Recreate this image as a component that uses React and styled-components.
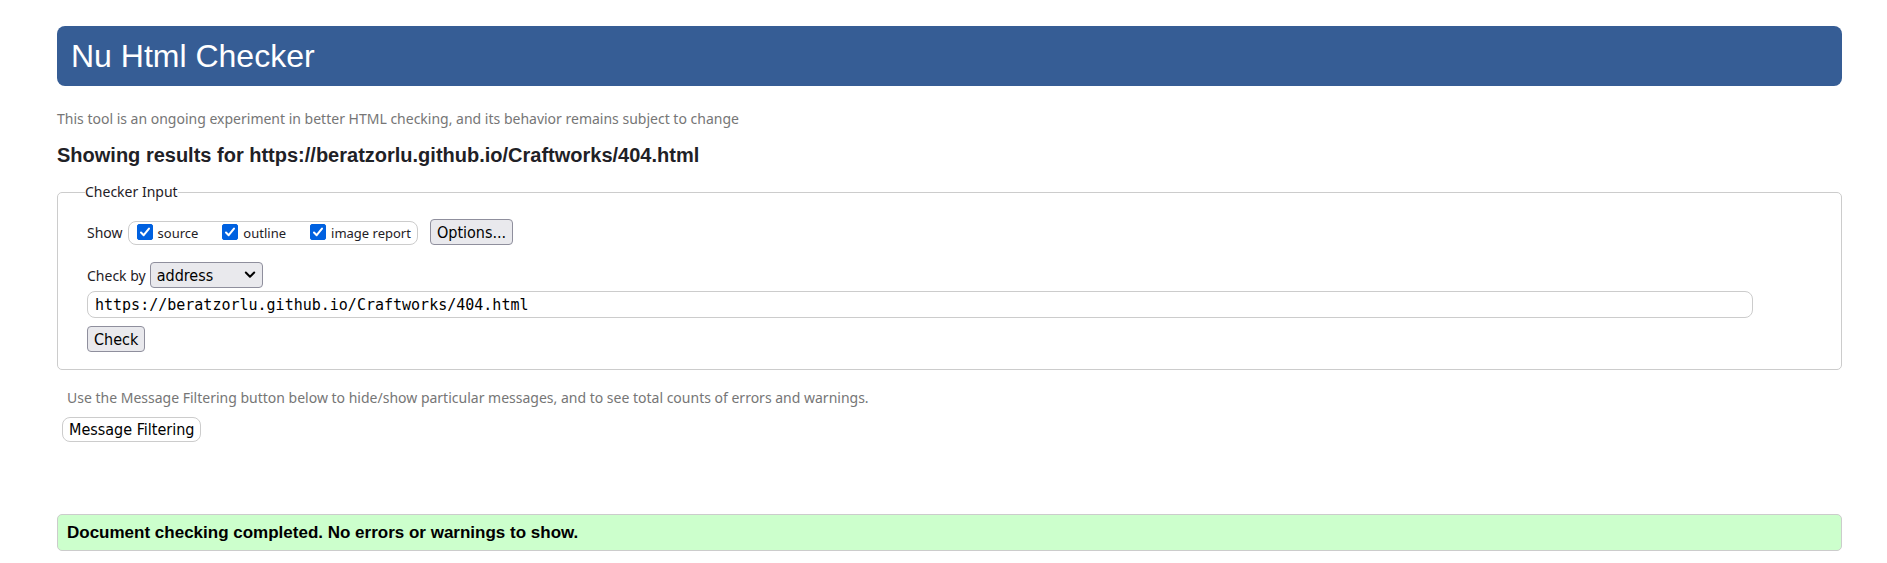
import React from "react";
import styled, { createGlobalStyle } from "styled-components";

const bodyFont = '"Noto Sans", "Open Sans", sans-serif';
const headingFont = '"Liberation Sans", Arial, sans-serif';
const controlFont = '"DejaVu Sans Condensed", "DejaVu Sans", sans-serif';

const GlobalStyle = createGlobalStyle`
  *, *::before, *::after { box-sizing: border-box; }
  body {
    margin: 0;
    background: #fff;
    color: #1f2126;
    font: 14px/20px ${bodyFont};
  }
`;

const Page = styled.div`
  padding: 26px 45px 14px 57px;
`;

const Banner = styled.header`
  display: flex;
  align-items: center;
  height: 60px;
  padding: 0 14px;
  border-radius: 8px;
  background: #365d95;
`;

const Title = styled.h1`
  margin: 0;
  color: #fff;
  font: 32px/40px ${headingFont};
`;

const Note = styled.p`
  margin: ${(p) => (p.$inset ? "18px 0 0 10px" : "23px 0 0")};
  color: #767676;
`;

const ResultsTitle = styled.h2`
  margin: 14px 0 0;
  font: bold 20px/24px ${headingFont};
`;

const InputPanel = styled.fieldset`
  margin: 15px 0 0;
  padding: 17px 88px 17px 29px;
  border: 1px solid #ccc;
  border-radius: 5px;
`;

const Legend = styled.legend`
  margin-left: -2px;
  padding: 0;
`;

const ControlRow = styled.div`
  display: flex;
  align-items: center;
  margin-bottom: ${(p) => p.$below}px;
`;

const RowLabel = styled.label`
  padding-top: 2px;
`;

const ShowOptions = styled.div`
  display: flex;
  align-items: center;
  gap: 24px;
  height: 24px;
  margin: 2px 12px 0 5px;
  padding: 0 6px 0 8px;
  border: 1px solid #ccc;
  border-radius: 8px;
`;

const CheckLabel = styled.label`
  display: flex;
  align-items: center;
  gap: 5px;
  font-size: 13px;
  line-height: 18px;
`;

const TickBox = styled.span`
  display: grid;
  width: 16px;
  height: 16px;
  margin-bottom: 2px;

  input, svg {
    grid-area: 1 / 1;
    width: 16px;
    height: 16px;
    margin: 0;
  }
  input {
    appearance: none;
    border: 1px solid #8f8f9d;
    border-radius: 2px;
  }
  input:checked {
    border-color: #0061e0;
    background: #0061e0;
  }
  svg { pointer-events: none; visibility: hidden; }
  input:checked + svg { visibility: visible; }
`;

const Button = styled.button`
  display: block;
  height: 26px;
  padding: 1px 6px 0;
  border: 1px solid #8f8f9d;
  border-radius: 4px;
  background: #e9e9ed;
  color: #000;
  font: 16px/22px ${controlFont};
`;

const FilterButton = styled(Button)`
  height: 25px;
  margin: 9px 0 0 5px;
  border-color: #ccc;
  border-radius: 8px;
  background: #fff;
`;

const SelectWrap = styled.span`
  display: grid;
  align-items: center;
  margin-left: 4px;

  svg {
    grid-area: 1 / 1;
    justify-self: end;
    margin-right: 7px;
    pointer-events: none;
  }
`;

const Select = styled.select`
  grid-area: 1 / 1;
  width: 113px;
  height: 26px;
  padding: 1px 6px 0;
  appearance: none;
  border: 1px solid #8f8f9d;
  border-radius: 4px;
  background: #e9e9ed;
  color: #000;
  font: 16px/22px ${controlFont};
`;

const AddressInput = styled.input`
  display: block;
  width: 100%;
  height: 27px;
  margin: 0 0 8px;
  padding: 1px 7px 0;
  border: 1px solid #ccc;
  border-radius: 8px;
  background: #fff;
  color: #000;
  font: 15px/20px "DejaVu Sans Mono", "Liberation Mono", monospace;
`;

const Success = styled.p`
  margin: 72px 0 0;
  padding: 7px 9px;
  border: 1px solid #ccc;
  border-radius: 5px;
  background: #cfc;
  color: #000;
  font: bold 17px/21px ${headingFont};
`;

function ShowOption({ children }) {
  return (
    <CheckLabel>
      <TickBox>
        <input type="checkbox" defaultChecked />
        <svg viewBox="0 0 16 16" fill="none" stroke="#fff" strokeWidth="2" strokeLinecap="round" strokeLinejoin="round" aria-hidden="true">
          <path d="M4 8.5 6.7 11.2 12 4.6" />
        </svg>
      </TickBox>
      {children}
    </CheckLabel>
  );
}

export default function App() {
  return (
    <>
      <GlobalStyle />
      <Page>
        <Banner>
          <Title>Nu Html Checker</Title>
        </Banner>
        <main>
          <Note>This tool is an ongoing experiment in better HTML checking, and its behavior remains subject to change</Note>
          <ResultsTitle>Showing results for https://beratzorlu.github.io/Craftworks/404.html</ResultsTitle>
          <form onSubmit={(e) => e.preventDefault()}>
            <InputPanel>
              <Legend>Checker Input</Legend>
              <ControlRow $below={17}>
                <RowLabel as="span" id="show">Show</RowLabel>
                <ShowOptions role="group" aria-labelledby="show">
                  <ShowOption>source</ShowOption>
                  <ShowOption>outline</ShowOption>
                  <ShowOption>image report</ShowOption>
                </ShowOptions>
                <Button type="button">Options...</Button>
              </ControlRow>
              <ControlRow $below={3}>
                <RowLabel htmlFor="method">Check by</RowLabel>
                <SelectWrap>
                  <Select id="method" defaultValue="address">
                    <option value="address">address</option>
                    <option value="file">file upload</option>
                    <option value="text">text input</option>
                  </Select>
                  <svg width="12" height="8" viewBox="0 0 12 8" fill="none" stroke="#000" strokeWidth="2" strokeLinecap="round" strokeLinejoin="round" aria-hidden="true">
                    <path d="M1.8 1.5 6 5.8 10.2 1.5" />
                  </svg>
                </SelectWrap>
              </ControlRow>
              <AddressInput type="url" aria-label="Address" defaultValue="https://beratzorlu.github.io/Craftworks/404.html" />
              <Button type="submit">Check</Button>
            </InputPanel>
          </form>
          <Note $inset>Use the Message Filtering button below to hide/show particular messages, and to see total counts of errors and warnings.</Note>
          <FilterButton type="button">Message Filtering</FilterButton>
          <Success>Document checking completed. No errors or warnings to show.</Success>
        </main>
      </Page>
    </>
  );
}
